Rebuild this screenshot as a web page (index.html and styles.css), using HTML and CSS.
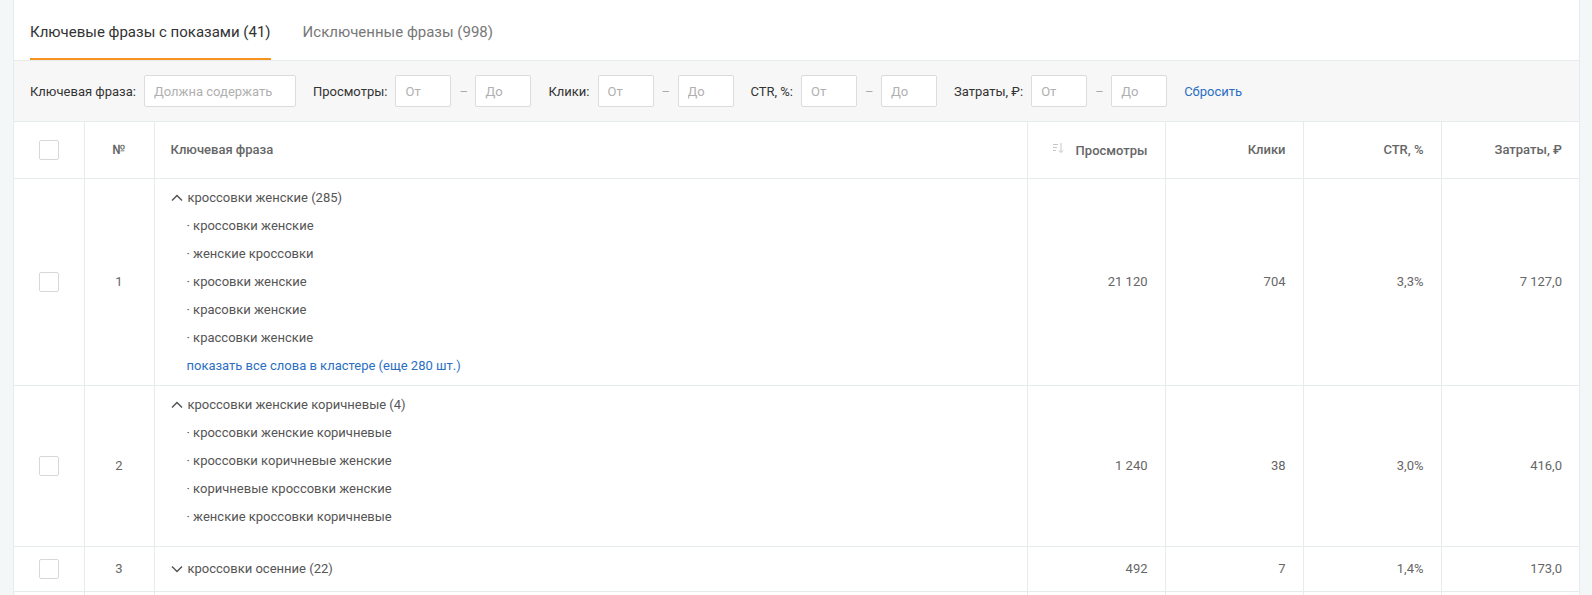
FILE: index.html
```html
<!DOCTYPE html>
<html lang="ru">
<head>
<meta charset="utf-8">
<title>Ключевые фразы</title>
<link rel="stylesheet" href="styles.css">
</head>
<body>
<div class="page">
  <div class="card">
    <nav class="tabs">
      <a class="tab tab--active">Ключевые фразы с показами (41)</a>
      <a class="tab">Исключенные фразы (998)</a>
    </nav>

    <div class="filters">
      <div class="filter">
        <span class="filter__label">Ключевая фраза:</span>
        <input class="input input--wide" placeholder="Должна содержать">
      </div>
      <div class="filter">
        <span class="filter__label">Просмотры:</span>
        <input class="input" placeholder="От">
        <span class="filter__dash">–</span>
        <input class="input" placeholder="До">
      </div>
      <div class="filter">
        <span class="filter__label">Клики:</span>
        <input class="input" placeholder="От">
        <span class="filter__dash">–</span>
        <input class="input" placeholder="До">
      </div>
      <div class="filter">
        <span class="filter__label">CTR, %:</span>
        <input class="input" placeholder="От">
        <span class="filter__dash">–</span>
        <input class="input" placeholder="До">
      </div>
      <div class="filter">
        <span class="filter__label">Затраты, ₽:</span>
        <input class="input" placeholder="От">
        <span class="filter__dash">–</span>
        <input class="input" placeholder="До">
      </div>
      <a class="link filters__reset">Сбросить</a>
    </div>

    <table class="grid">
      <colgroup>
        <col class="col-check"><col class="col-num"><col><col class="col-metric"><col class="col-metric"><col class="col-metric"><col class="col-metric">
      </colgroup>
      <thead>
        <tr>
          <th class="cell-center"><span class="checkbox"></span></th>
          <th class="cell-center">№</th>
          <th class="cell-left">Ключевая фраза</th>
          <th class="cell-right">
            <span class="sort">
              <svg class="sort__icon" width="12" height="12" viewBox="0 0 12 12" fill="none" stroke="#c4c7ca" stroke-width="1">
                <path d="M1 2.5h5M1 5.5h4M1 8.5h3"/>
                <path d="M9 1v9.5M6.8 8.3L9 10.5l2.2-2.2"/>
              </svg>
              Просмотры
            </span>
          </th>
          <th class="cell-right">Клики</th>
          <th class="cell-right">CTR, %</th>
          <th class="cell-right">Затраты, ₽</th>
        </tr>
      </thead>
      <tbody>
        <tr>
          <td class="cell-center"><span class="checkbox"></span></td>
          <td class="cell-center">1</td>
          <td class="cell-left">
            <div class="cluster">
              <div class="cluster__head">
                <svg class="chev" width="12" height="8" viewBox="0 0 12 8" fill="none" stroke="#555" stroke-width="1.5"><path d="M1 6.5L6 1.5l5 5"/></svg>
                кроссовки женские (285)
              </div>
              <div class="cluster__item">· кроссовки женские</div>
              <div class="cluster__item">· женские кроссовки</div>
              <div class="cluster__item">· кросовки женские</div>
              <div class="cluster__item">· красовки женские</div>
              <div class="cluster__item">· крассовки женские</div>
              <div class="cluster__item"><a class="link">показать все слова в кластере (еще 280 шт.)</a></div>
            </div>
          </td>
          <td class="cell-right">21 120</td>
          <td class="cell-right">704</td>
          <td class="cell-right">3,3%</td>
          <td class="cell-right">7 127,0</td>
        </tr>
        <tr>
          <td class="cell-center"><span class="checkbox"></span></td>
          <td class="cell-center">2</td>
          <td class="cell-left">
            <div class="cluster cluster--nolink">
              <div class="cluster__head">
                <svg class="chev" width="12" height="8" viewBox="0 0 12 8" fill="none" stroke="#555" stroke-width="1.5"><path d="M1 6.5L6 1.5l5 5"/></svg>
                кроссовки женские коричневые (4)
              </div>
              <div class="cluster__item">· кроссовки женские коричневые</div>
              <div class="cluster__item">· кроссовки коричневые женские</div>
              <div class="cluster__item">· коричневые кроссовки женские</div>
              <div class="cluster__item">· женские кроссовки коричневые</div>
            </div>
          </td>
          <td class="cell-right">1 240</td>
          <td class="cell-right">38</td>
          <td class="cell-right">3,0%</td>
          <td class="cell-right">416,0</td>
        </tr>
        <tr class="row-short">
          <td class="cell-center"><span class="checkbox"></span></td>
          <td class="cell-center">3</td>
          <td class="cell-left">
            <div class="cluster">
              <div class="cluster__head">
                <svg class="chev" width="12" height="8" viewBox="0 0 12 8" fill="none" stroke="#555" stroke-width="1.5"><path d="M1 1.5L6 6.5l5-5"/></svg>
                кроссовки осенние (22)
              </div>
            </div>
          </td>
          <td class="cell-right">492</td>
          <td class="cell-right">7</td>
          <td class="cell-right">1,4%</td>
          <td class="cell-right">173,0</td>
        </tr>
        <tr class="row-short">
          <td class="cell-center"></td>
          <td class="cell-center"></td>
          <td class="cell-left"></td>
          <td class="cell-right"></td>
          <td class="cell-right"></td>
          <td class="cell-right"></td>
          <td class="cell-right"></td>
        </tr>
      </tbody>
    </table>
  </div>
</div>
</body>
</html>
```

FILE: styles.css
```css
* { box-sizing: border-box; }

html, body {
  margin: 0;
  padding: 0;
  background: #f3f7f8;
  font-family: Roboto, "Liberation Sans", Arial, sans-serif;
  font-size: 13px;
  color: #555;
  overflow: hidden;
}

.page {
  padding-left: 13px;
  width: 1580px;
}

.card {
  background: #fff;
  border-left: 1px solid #e6ebed;
  border-right: 1px solid #e6ebed;
}

/* Tabs */
.tabs {
  display: flex;
  gap: 32px;
  height: 61px;
  padding-left: 16px;
  border-bottom: 1px solid #e6ebed;
}

.tab {
  display: block;
  height: 60px;
  padding-top: 22px;
  line-height: 20px;
  font-size: 15px;
  color: #777;
  cursor: pointer;
  border-bottom: 2px solid transparent;
}

.tab--active {
  color: #333;
  border-bottom-color: #f7931e;
}

/* Filters */
.filters {
  display: flex;
  align-items: center;
  gap: 17px;
  height: 61px;
  padding-left: 16px;
  background: #f7f7f7;
  border-bottom: 1px solid #e6ebed;
}

.filter {
  display: flex;
  align-items: center;
  gap: 8px;
}

.filter__label {
  color: #333;
  white-space: nowrap;
}

.filter__dash {
  width: 8px;
  text-align: center;
  color: #aaa;
}

.input {
  width: 56px;
  height: 32px;
  padding: 0 9px;
  border: 1px solid #dcdcdc;
  border-radius: 2px;
  background: #fff;
  font-family: inherit;
  font-size: 13px;
  color: #333;
  outline: none;
}

.input::placeholder { color: #b0b0b0; }

.input--wide { width: 152px; }

.link {
  color: #2b6fc2;
  cursor: pointer;
  text-decoration: none;
}

/* Table */
.grid {
  width: 100%;
  border-collapse: collapse;
  table-layout: fixed;
}

.col-check { width: 70px; }
.col-num { width: 70px; }
.col-metric { width: 138px; }

.grid th,
.grid td {
  border-right: 1px solid #e6ebed;
  border-bottom: 1px solid #e6ebed;
  vertical-align: middle;
  padding: 0 17px 0 16px;
}

.grid th:last-child,
.grid td:last-child { border-right: none; }

.grid th {
  height: 56px;
  font-weight: 500;
  color: #666;
  text-align: left;
}

.grid td { color: #666; }

.cell-center { text-align: center !important; padding-left: 0 !important; padding-right: 0 !important; }
.cell-left { text-align: left; }
.cell-right { text-align: right !important; }

.grid td.cell-left {
  padding-top: 11px;
  padding-bottom: 11px;
}

.row-short { height: 45px; }

.checkbox {
  display: inline-block;
  width: 20px;
  height: 20px;
  border: 1px solid #d6d9dc;
  border-radius: 2px;
  background: #fff;
  vertical-align: middle;
}

.sort {
  display: inline-flex;
  align-items: center;
  gap: 12px;
}

.sort__icon { display: block; margin-top: -4px; }

.cluster { color: #555; line-height: 16px; }

.cluster--nolink { padding-bottom: 10px; }

.cluster__head {
  display: flex;
  align-items: center;
  gap: 5px;
}

.chev { display: block; }

.cluster__item {
  margin-top: 12px;
  padding-left: 16px;
}
```
